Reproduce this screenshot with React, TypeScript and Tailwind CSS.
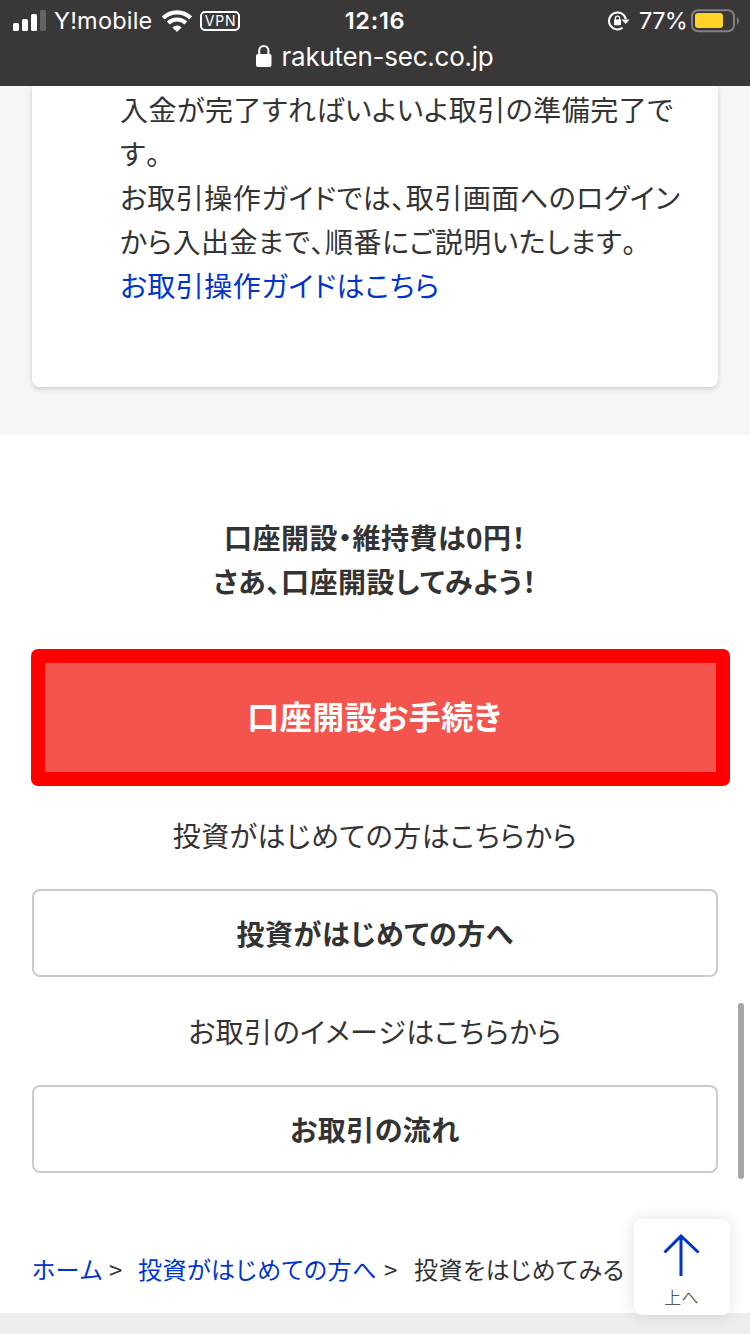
import type { ReactNode } from "react";

const JP = "font-['Noto_Sans_CJK_JP',sans-serif] [font-feature-settings:'palt'] [font-kerning:none]";

function StatusBar() {
  return (
    <header className="h-[86px] bg-[#3a3738] font-['Inter',sans-serif] text-white">
      <div className="grid h-10 grid-cols-3 items-center">
        <div className="flex items-center pl-[13px]">
          <svg width="34" height="22" viewBox="0 0 34 22" fill="white" className="shrink-0">
            <rect x="0" y="13" width="6" height="8" rx="1.5" />
            <rect x="9" y="9" width="6" height="12" rx="1.5" />
            <rect x="18" y="4" width="6" height="17" rx="1.5" />
            <rect x="27" y="0" width="6" height="21" rx="1.5" opacity="0.22" />
          </svg>
          <span className="ml-[7px] w-[108px] shrink-0 whitespace-nowrap pt-px text-[23.5px] leading-10 tracking-[0.2px]">Y!mobile</span>
          <svg width="30" height="22" viewBox="0 0 30 22" className="shrink-0" fill="none" stroke="white">
            <path d="M1.3 8 A19.5 19.5 0 0 1 28.7 8" strokeWidth="4.2" />
            <path d="M6.2 13 A12.5 12.5 0 0 1 23.8 13" strokeWidth="4" />
            <path d="M15 22 L10.4 17.4 A6.5 6.5 0 0 1 19.6 17.4 Z" fill="white" stroke="none" />
          </svg>
          <span className="ml-2 flex h-5 w-10 shrink-0 items-center justify-center rounded-[5px] border-2 border-white pl-px text-[14px] font-normal tracking-[0.8px]">VPN</span>
        </div>
        <div className="pt-px text-center text-[23.5px] font-semibold leading-10 tracking-[0.7px]">12:16</div>
        <div className="flex items-center justify-end pr-[11px]">
          <svg width="22" height="20" viewBox="0 0 22 20" fill="none">
            <path d="M14.6 16.8 A8.5 8.5 0 1 1 17.8 8" stroke="white" strokeWidth="2" />
            <path d="M13.4 8.4 H21.5 L17.7 13 Z" fill="white" />
            <rect x="6" y="8.6" width="7" height="5.7" rx="0.7" fill="white" />
            <path d="M7.4 9 V7.2 A2.1 2.1 0 0 1 11.6 7.2 V9" stroke="white" strokeWidth="1.3" />
          </svg>
          <span className="ml-[9px] w-[52px] whitespace-nowrap pt-px text-[23.5px] leading-10 tracking-[-0.6px]">77%</span>
          <svg width="48" height="24" viewBox="0 0 48 24" fill="none">
            <rect x="1" y="1.2" width="42" height="21" rx="6" stroke="#828081" strokeWidth="2" />
            <rect x="4" y="4" width="28" height="15" rx="3" fill="#ffd426" />
            <path d="M46 8 Q50 12 46 16 Z" fill="#828081" />
          </svg>
        </div>
      </div>
      <div className="flex h-8 items-center justify-center pr-px">
        <svg width="16" height="24" viewBox="0 0 16 24" className="mr-[10px]">
          <rect x="0" y="10" width="15.5" height="13" rx="2" fill="white" />
          <path d="M3.2 11 V6.5 A4.6 4.6 0 0 1 12.4 6.5 V11" fill="none" stroke="white" strokeWidth="2" />
        </svg>
        <span className="whitespace-nowrap pt-px text-[26px] leading-8 tracking-[-0.25px]">rakuten-sec.co.jp</span>
      </div>
    </header>
  );
}

function OutlineButton({ children }: { children: ReactNode }) {
  return (
    <button className="flex h-[88px] w-full items-center justify-center rounded-lg border-2 border-[#ccc] bg-white text-[28px] font-bold tracking-[0.5px]">
      {children}
    </button>
  );
}

export default function App() {
  return (
    <div className="relative flex h-[1334px] w-[750px] flex-col overflow-hidden bg-white text-[#333]">
      <StatusBar />
      <main className={`${JP} flex flex-1 flex-col text-[28px] leading-[44px] tracking-[0.5px]`}>
        <section className="h-[349px] bg-[#f6f6f6] px-8">
          <div className="h-[301px] w-[686px] rounded-b-lg bg-white pl-[88px] pt-px shadow-[0_2px_5px_rgba(0,0,0,0.18)]">
            <p className="whitespace-nowrap">
              入金が完了すればいよいよ取引の準備完了で<br />す。<br />
              お取引操作ガイドでは、取引画面へのログイン<br />
              から入出金まで、順番にご説明いたします。<br />
              <a className="text-[#0035cc]">お取引操作ガイドはこちら</a>
            </p>
          </div>
        </section>
        <section className="flex flex-col pt-[80px] text-center">
          <h2 className="font-bold">口座開設・維持費は0円！<br />さあ、口座開設してみよう！</h2>
          <button className="ml-[31px] mt-[46px] flex h-[137px] w-[699px] items-center justify-center rounded-[7px] border-[14px] border-[#f00] bg-[#f3544e] pb-[6px] pr-[12px] text-[32px] font-bold text-white">
            口座開設お手続き
          </button>
          <p className="mt-[27px]">投資がはじめての方はこちらから</p>
          <div className="mt-[32px] px-8"><OutlineButton>投資がはじめての方へ</OutlineButton></div>
          <p className="mt-[32px]">お取引のイメージはこちらから</p>
          <div className="mt-[32px] px-8"><OutlineButton>お取引の流れ</OutlineButton></div>
        </section>
        <nav className="mt-[78px] flex h-[36px] items-center whitespace-nowrap pl-8 text-[24px] leading-[36px]">
          <a className="w-[77px] text-[#0035cc]">ホーム</a>
          <span className="w-[29px] text-[24px]">&gt;</span>
          <a className="w-[246px] text-[#0035cc]">投資がはじめての方へ</a>
          <span className="w-[29px] text-[24px]">&gt;</span>
          <span className="pl-px">投資をはじめてみる</span>
        </nav>
        <footer className="mt-[26px] flex-1 bg-[#ededed]" />
      </main>
      <div className="absolute left-[738px] top-[1003px] h-[176px] w-[6px] rounded-full bg-[#a6a6a6]" />
      <button className={`${JP} absolute left-[634px] top-[1219px] flex h-24 w-24 flex-col items-center rounded-lg bg-white pt-[15px] text-[17px] leading-[26px] shadow-[0_0_16px_rgba(0,0,0,0.12)]`}>
        <svg width="38" height="43" viewBox="0 0 38 43" fill="none" stroke="#0035cc" strokeWidth="3">
          <path d="M18 42 V2 M1.5 18.5 L18 2 L35.5 18.5" />
        </svg>
        <span className="mt-[7px] pr-px font-light">上へ</span>
      </button>
    </div>
  );
}
